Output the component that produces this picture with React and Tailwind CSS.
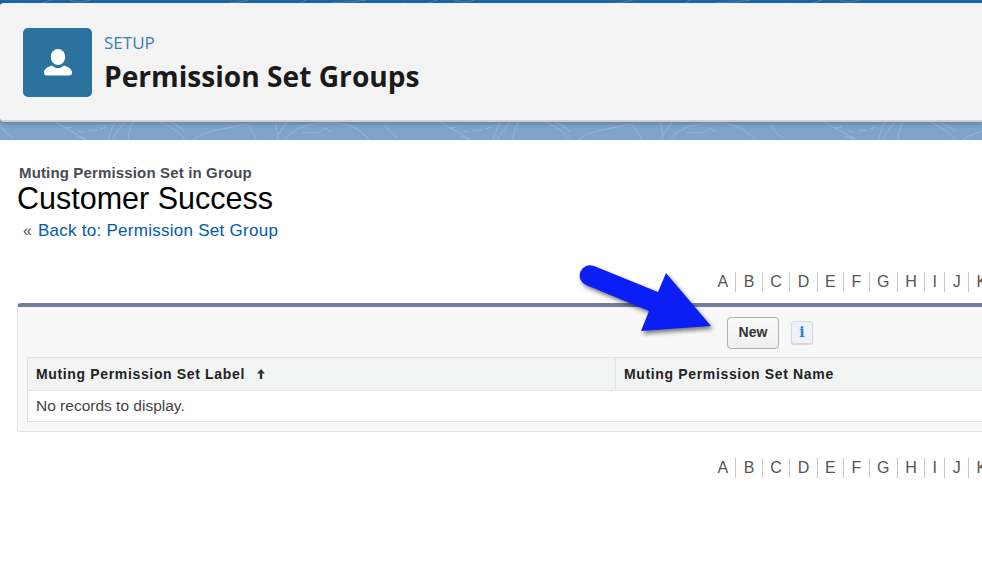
import React from "react";

const letters = ["A", "B", "C", "D", "E", "F", "G", "H", "I", "J", "K"];

const AlphaBar = () => (
  <div className="flex pl-[710px] w-[982px] overflow-hidden h-[24px] items-center text-[16px] leading-[20px] text-[#555]">
    {letters.map((l) => (
      <span key={l} className="px-[7.4px] border-r border-[#c8c8c8] shrink-0">
        {l}
      </span>
    ))}
  </div>
);

// the banner's contour lines repeat every 385px
const BannerLines = () => (
  <svg className="absolute inset-0" width="982" height="140" fill="none" stroke="#ffffff" strokeOpacity="0.18" strokeWidth="1">
    <defs>
      <pattern id="contours" x="0" y="0" width="385" height="140" patternUnits="userSpaceOnUse">
        <path d="M0 125c3 5 8 10 13 13M55 122c10 6 22 12 30 18" />
        <path d="M64 128l8-1M78 131l5 1M88 131l10-1M75 137l10 1M100 129l6-2" />
        <path d="M115 122c-3 6-5 12-7 18M125 122c-5 6-10 12-13 18M133 122c-3 6-5 12-5 18" />
        <path d="M160 122c8 3 20 10 25 18M170 122c6 3 12 6 15 10" />
        <path d="M193 140c12-10 30-10 52-16 4 2 8 8 12 16" />
        <path d="M275 122l3 13M287 122l-9 13M277 135l1 5" />
        <path d="M285 140c10-14 28-17 45-17 20 0 30 6 40 17" />
        <path d="M302 133c6-3 12 2 18-1l5-4 6 4" />
        <path d="M18 3c14 2 20 2 34-3M70 0c5 3 12 3 20 0M230 3c10-1 14-2 18-3M300 3l6-3M330 3c14-1 24-1 36-3" />
      </pattern>
    </defs>
    <rect x="0" y="0" width="982" height="140" fill="url(#contours)" stroke="none" />
  </svg>
);

const BlueArrow = () => (
  <svg
    className="absolute left-[570px] top-[255px] drop-shadow-[2px_3px_2px_rgba(0,0,0,0.5)]"
    width="160"
    height="90"
    viewBox="0 0 160 90"
  >
    <path d="M24 11L88 37L96 18L141 71L71 76L79 56L16 30A10.300 10.300 0 0 1 24 11Z" fill="#0a1ef5" />
  </svg>
);

export default function App() {
  return (
    <div className="relative w-[982px] h-[587px] overflow-hidden bg-white font-['Liberation_Sans',sans-serif]">
      <div className="relative h-[140px] bg-[linear-gradient(to_bottom,#1f65a6_0px,#1f65a6_4px,#7fa3cc_4px)] pt-[3px]">
        <BannerLines />
        <div className="relative h-[119px] rounded-l-[4px] bg-[#f3f3f3] border-b-2 border-[#cfcfcf] shadow-[0_2px_4px_rgba(0,0,0,0.2)] flex items-center pl-[23px] gap-[12px] pt-[2px]">
          <div className="w-[69px] h-[69px] rounded-[5px] bg-[#2b729f] flex items-center justify-center">
            <svg width="30" height="30" viewBox="0 0 30 30" fill="#ffffff">
              <ellipse cx="15" cy="9" rx="7.2" ry="8" />
              <path d="M1 24.5c0-4 4-5.500 8-7 1.500 1.500 3.500 2.600 6 2.600s4.500-1.100 6-2.600c4 1.500 8 3 8 7 0 2-1 3-3 3H4c-2 0-3-1-3-3z" />
            </svg>
          </div>
          <div className="font-['Open_Sans',sans-serif] mt-[1px]">
            <div className="text-[17px] leading-[22px] text-[#3b7fb0] mb-[4px]">SETUP</div>
            <div className="text-[28.15px] leading-[36px] font-bold text-[#1a1a1a]">Permission Set Groups</div>
          </div>
        </div>
      </div>

      <div className="pt-[24px]">
        <div className="pl-[19px] text-[15px] leading-[18px] font-bold text-[#4a4a56] tracking-[0.15px]">Muting Permission Set in Group</div>
        <div className="pl-[17px] -mt-[1px] text-[30.5px] leading-[34px] text-black">Customer Success</div>
        <div className="pl-[23px] mt-[6px] text-[17px] leading-[20px] tracking-[0.27px] text-[#015ba7]">
          <span className="text-[#555] text-[16px] tracking-normal mr-[6px]">«</span>Back to: Permission Set Group
        </div>
      </div>

      <div className="mt-[29px]">
        <AlphaBar />
      </div>

      <div className="mt-[9px] ml-[17px] w-[1100px] h-[129px] rounded-[4px] border border-[#e0e3e5] border-t-4 border-t-[#737d9b] bg-[#f8f8f8] pl-[9px]">
        <div className="h-[50px] flex items-center pl-[700px] pt-[1px]">
          <button className="w-[52px] h-[32px] rounded-[4px] border border-[#b0b0b0] bg-[linear-gradient(to_bottom,#fbfbfb,#efefef)] text-[14px] font-bold text-[#333]">
            New
          </button>
          <div className="ml-[12px] w-[22px] h-[23px] rounded-[3px] border border-[#d5d9de] bg-[#eef2f6] shadow-[0_1px_1px_rgba(0,0,0,0.15)] flex items-center justify-center font-['DejaVu_Serif',serif] font-bold text-[14px] text-[#2a7de1]">
            i
          </div>
        </div>
        <div className="border border-[#e0e3e5] bg-white">
          <div className="flex h-[33px] bg-[#f2f3f3] border-b border-[#e0e3e5] text-[14px] font-bold text-[#222] items-center">
            <div className="w-[588px] h-full border-r border-[#e0e3e5] pl-[8px] flex items-center tracking-[0.65px]">
              Muting Permission Set Label
              <svg className="ml-[11px]" width="10" height="12" viewBox="0 0 10 12" fill="#333">
                <path d="M5 1L9 5.500H6.200V11H3.800V5.500H1z" />
              </svg>
            </div>
            <div className="pl-[8px] tracking-[0.65px]">Muting Permission Set Name</div>
          </div>
          <div className="h-[30px] flex items-center pl-[8px] text-[15.5px] text-[#444]">No records to display.</div>
        </div>
      </div>

      <div className="mt-[24px]">
        <AlphaBar />
      </div>

      <BlueArrow />
    </div>
  );
}
